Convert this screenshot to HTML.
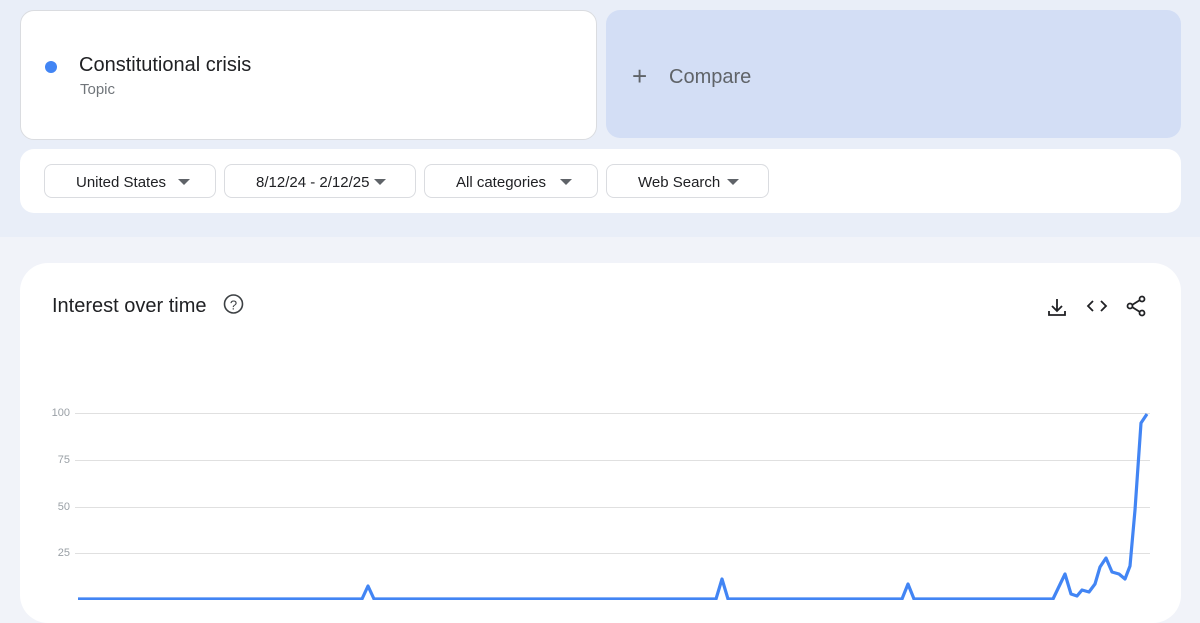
<!DOCTYPE html>
<html><head><style>
body{margin:0;width:1200px;height:600px;overflow:hidden;background:#f1f3f9;font-family:"Liberation Sans",sans-serif;position:relative}
.top{position:absolute;left:0;top:0;width:1200px;height:237px;background:#e9eef8}
.card{position:absolute;background:#fff;border-radius:14px}
.sel{position:absolute;top:164px;height:34px;border:1px solid #dadce0;border-radius:8px;background:#fff;font-size:15px;color:#202124;line-height:35px;box-sizing:border-box}
.sel span{position:absolute;top:0}
.tri{position:absolute;top:14px;width:0;height:0;border-left:6px solid transparent;border-right:6px solid transparent;border-top:6px solid #5f6368}
.yl{position:absolute;left:40px;width:30px;text-align:right;font-size:11px;color:#9aa0a6}
</style></head><body>
<div class="top"></div>
<div class="card" style="left:20px;top:10px;width:577px;height:130px;border:1px solid #dadce0;box-sizing:border-box"></div>
<div style="position:absolute;left:45px;top:61px;width:12px;height:12px;border-radius:50%;background:#4285f4"></div>
<div style="position:absolute;left:79px;top:54px;font-size:20px;color:#202124">Constitutional crisis</div>
<div style="position:absolute;left:80px;top:81px;font-size:15px;color:#70757a">Topic</div>
<div class="card" style="left:606px;top:10px;width:575px;height:128px;background:#d3def5"></div>
<div style="position:absolute;left:632px;top:63px;font-size:26px;color:#5f6368;line-height:26px">+</div>
<div style="position:absolute;left:669px;top:66px;font-size:20px;color:#5f6368">Compare</div>
<div class="card" style="left:20px;top:149px;width:1161px;height:64px"></div>
<div class="sel" style="left:44px;width:172px"><span style="left:31px">United States</span><i class="tri" style="left:133px"></i></div>
<div class="sel" style="left:224px;width:192px"><span style="left:31px">8/12/24 - 2/12/25</span><i class="tri" style="left:149px"></i></div>
<div class="sel" style="left:424px;width:174px"><span style="left:31px">All categories</span><i class="tri" style="left:135px"></i></div>
<div class="sel" style="left:606px;width:163px"><span style="left:31px">Web Search</span><i class="tri" style="left:120px"></i></div>
<div class="card" style="left:20px;top:263px;width:1161px;height:360px;border-radius:28px"></div>
<div style="position:absolute;left:52px;top:295px;font-size:20px;color:#202124">Interest over time</div>
<svg style="position:absolute;left:0;top:0" width="1200" height="600">
<circle cx="233.5" cy="304" r="9" fill="none" stroke="#3c4043" stroke-width="1.6"/>
<text x="233.5" y="309.5" font-size="13" text-anchor="middle" fill="#3c4043" font-family="Liberation Sans">?</text>
<g fill="none" stroke="#202124" stroke-width="1.8">
<path d="M1057 299v11M1052 306l5 5 5-5M1049 311v4h16v-4"/>
<path d="M1093 301l-5 5 5 5M1101 301l5 5-5 5"/>
<circle cx="1142" cy="299" r="2.5"/><circle cx="1130" cy="306" r="2.5"/><circle cx="1142" cy="313" r="2.5"/>
<path d="M1132 305l8-5M1132 307l8 5"/>
</g>
<g stroke="#e0e0e0" stroke-width="1">
<path d="M75 413.5H1150M75 460.5H1150M75 507.5H1150M75 553.5H1150"/>
</g>
<polyline fill="none" stroke="#4285f4" stroke-width="3.2" stroke-linejoin="round" points="78,599 362,599 368,586 374,599 716,599 722,579 728,599 902,599 908,584 914,599 1053,599 1065,574 1071,594 1077,596 1082,590 1089,592 1095,584 1100,567 1106,558 1112,572 1119,574 1125,579 1130,566 1135,510 1141,423 1147,414"/>
</svg>
<div class="yl" style="top:407px">100</div>
<div class="yl" style="top:454px">75</div>
<div class="yl" style="top:501px">50</div>
<div class="yl" style="top:547px">25</div>
</body></html>
